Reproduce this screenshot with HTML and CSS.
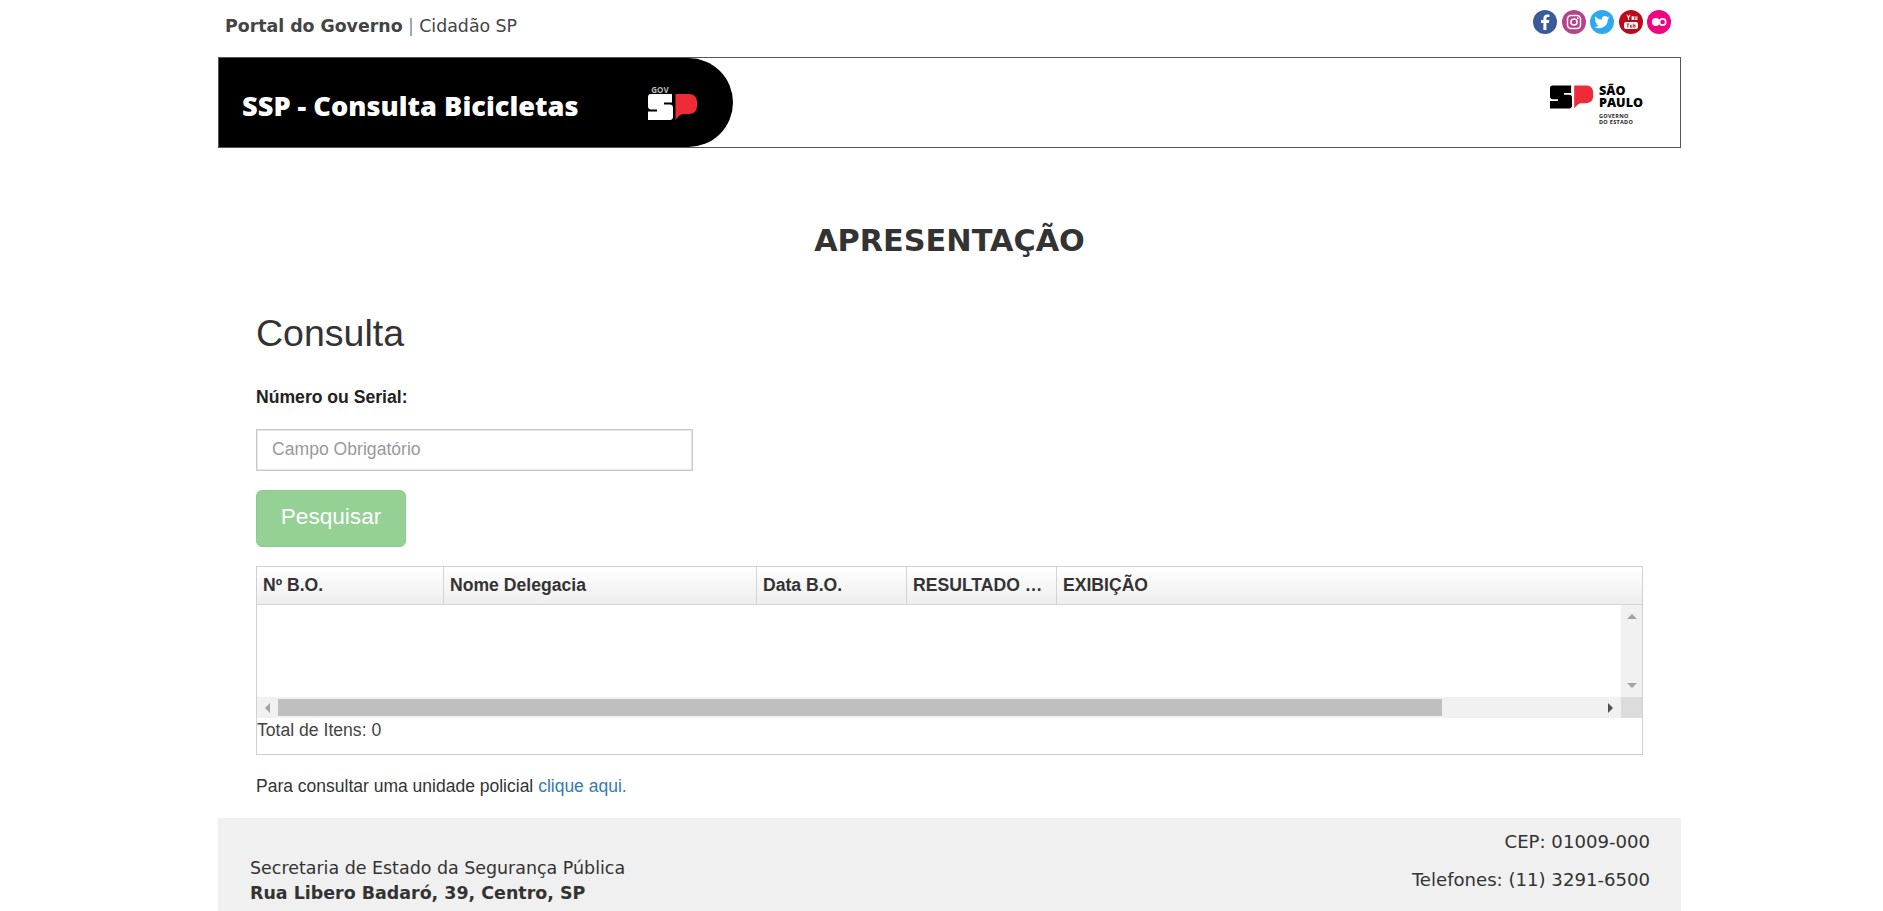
FILE: index.html
```html
<!DOCTYPE html>
<html lang="pt-BR">
<head>
<meta charset="utf-8">
<title>SSP - Consulta Bicicletas</title>
<link rel="stylesheet" href="styles.css">
</head>
<body>
<div class="page">
  <header class="topbar">
    <p class="portal"><strong>Portal do Governo</strong> <span class="sep">|</span> Cidadão SP</p>
    <ul class="social">
      <li class="soc soc-fb"><svg viewBox="0 0 24 24"><path fill="#fff" d="M13.4 20v-7.1h2.5l.4-2.8h-2.9V8.4c0-.8.3-1.4 1.4-1.4h1.6V4.500c-.3 0-1.200-.1-2.300-.1-2.200 0-3.700 1.300-3.700 3.800v1.900H8v2.800h2.400V20z"/></svg></li>
      <li class="soc soc-ig"><svg viewBox="0 0 24 24"><rect x="5.500" y="5.500" width="13" height="13" rx="3.500" fill="none" stroke="#fff" stroke-width="1.500"/><circle cx="12" cy="12" r="3.100" fill="none" stroke="#fff" stroke-width="1.500"/><circle cx="15.800" cy="8.200" r=".9" fill="#fff"/></svg></li>
      <li class="soc soc-tw"><svg viewBox="0 0 24 24"><path fill="#fff" d="M19.500 7.400c-.6.3-1.200.4-1.800.5.600-.4 1.100-1 1.400-1.700-.6.400-1.300.6-2 .8a3.100 3.100 0 0 0-5.300 2.800 8.800 8.800 0 0 1-6.400-3.200 3.100 3.100 0 0 0 1 4.100c-.5 0-1-.2-1.400-.4 0 1.500 1.100 2.800 2.500 3.100-.5.100-.9.100-1.400.1.400 1.200 1.500 2.100 2.900 2.100a6.200 6.200 0 0 1-4.600 1.300 8.800 8.800 0 0 0 13.500-7.800c.6-.5 1.200-1.100 1.600-1.700z"/></svg></li>
      <li class="soc soc-yt"><svg viewBox="0 0 24 24"><path fill="#fff" d="M7.500 4.800h1.200l.8 1.900.8-1.900h1.200l-1.500 3.200v2H9V8zM12.600 6.200h2.200v3.800h-2.200zM15.600 6.200h1v3h.8v-3h1v3.800h-2.800zM7 12h10a2 2 0 0 1 2 2v3a2 2 0 0 1-2 2H7a2 2 0 0 1-2-2v-3a2 2 0 0 1 2-2z"/><path fill="#bb0a1a" d="M7.500 13.400h2.800v.9h-.9v3.300h-1v-3.300h-.9zM11 14.800h.8v2h.7v-2h.8v2.800H11zM14.300 13.400h.8v1.400h1.400v2.800h-2.200zM15.100 15.600v1.200h.6v-1.200z"/></svg></li>
      <li class="soc soc-fl"><svg viewBox="0 0 24 24"><circle cx="8.800" cy="12" r="3.900" fill="#fff"/><circle cx="15.600" cy="12" r="3.100" fill="#f0047f" stroke="#fff" stroke-width="1.600"/></svg></li>
    </ul>
  </header>

  <div class="banner">
    <div class="banner-title">
      <span class="banner-text">SSP - Consulta Bicicletas</span>
      <div class="gov-mark">
        <span class="gov-label">GOV</span>
        <svg class="sp-mark" viewBox="0 0 50 26">
          <path fill="#fff" d="M3 0H24V8.500H16V10.500H22C24 10.500 25 12 25 13.500V23C25 24.500 24 26 22 26H0V17.500H9V15.500H3C1 15.500 0 14 0 12.500V3C0 1 1 0 3 0Z"/>
          <path fill="#ee2b36" d="M27.500 0H41c5 0 8 3 8 8v4c0 5-3 8-8 8h-5c-4 0-6 3-8.500 6z"/>
        </svg>
      </div>
    </div>
    <div class="state-logo">
      <svg class="sp-mark-large" viewBox="0 0 50 26">
        <path fill="#000" d="M3 0H24V8.500H16V10.500H22C24 10.500 25 12 25 13.500V23C25 24.500 24 26 22 26H0V17.500H9V15.500H3C1 15.500 0 14 0 12.500V3C0 1 1 0 3 0Z"/>
        <path fill="#ee2b36" d="M27.500 0H41c5 0 8 3 8 8v4c0 5-3 8-8 8h-5c-4 0-6 3-8.500 6z"/>
      </svg>
      <div class="state-text">
        <span class="state-name">SÃO<br>PAULO</span>
        <span class="state-sub">GOVERNO<br>DO ESTADO</span>
      </div>
    </div>
  </div>

  <main class="content">
    <h1 class="page-title">APRESENTAÇÃO</h1>
    <h2 class="section-title">Consulta</h2>
    <label class="field-label" for="serial">Número ou Serial:</label>
    <input class="field-input" id="serial" type="text" placeholder="Campo Obrigatório">
    <button class="btn-search" type="button">Pesquisar</button>

    <section class="grid">
      <div class="grid-head">
        <div class="grid-col">Nº B.O.</div>
        <div class="grid-col">Nome Delegacia</div>
        <div class="grid-col">Data B.O.</div>
        <div class="grid-col">RESULTADO …</div>
        <div class="grid-col">EXIBIÇÃO</div>
      </div>
      <div class="grid-body">
        <div class="grid-rows"></div>
        <div class="vscroll">
          <span class="arrow arrow-up"></span>
          <span class="arrow arrow-down"></span>
        </div>
      </div>
      <div class="hscroll">
        <div class="hbutton"><span class="arrow arrow-left"></span></div>
        <div class="hthumb"></div>
        <div class="htrack"></div>
        <div class="hbutton"><span class="arrow arrow-right"></span></div>
        <div class="corner"></div>
      </div>
      <div class="grid-foot">Total de Itens: 0</div>
    </section>

    <p class="note">Para consultar uma unidade policial <a class="note-link" href="#">clique aqui.</a></p>
  </main>

  <footer class="footer">
    <div class="footer-left">
      <p class="footer-line">Secretaria de Estado da Segurança Pública</p>
      <p class="footer-line"><strong>Rua Libero Badaró, 39, Centro, SP</strong></p>
    </div>
    <div class="footer-right">
      <p class="footer-contact">CEP: 01009-000</p>
      <p class="footer-contact">Telefones: (11) 3291-6500</p>
    </div>
  </footer>
</div>
</body>
</html>
```

FILE: styles.css
```css
* { box-sizing: border-box; }
html, body { margin: 0; padding: 0; background: #fff; }
body { font-family: "Liberation Sans", Arial, sans-serif; font-size: 17.6px; color: #333; }
p, h1, h2, ul { margin: 0; padding: 0; }
.page { width: 1463px; margin-left: 218px; }

.topbar { height: 57px; display: flex; justify-content: space-between; align-items: flex-start; }
.portal { font-family: "DejaVu Sans", sans-serif; font-size: 17.400px; line-height: 20px; margin: 16px 0 0 7px; color: #444; word-spacing: -.2px; }
.portal strong { color: #444; }
.sep { color: #7a8bb0; }
.social { list-style: none; display: flex; gap: 4.500px; margin: 10px 10px 0 0; }
.soc { width: 24px; height: 24px; border-radius: 50%; display: block; }
.soc svg { display: block; width: 24px; height: 24px; }
.soc-fb { background: #3b5a98; }
.soc-ig { background: #b9408c; }
.soc-tw { background: #2da9f0; }
.soc-yt { background: #bb0a1a; }
.soc-fl { background: #f0047f; }

.banner { height: 91px; border: 1px solid #555; display: flex; justify-content: space-between; align-items: center; }
.banner-title { width: 514px; height: 89px; background: #000; border-radius: 0 45px 45px 0; display: flex; align-items: center; padding: 0 34px 0 23px; justify-content: space-between; }
.banner-text { font-family: "Open Sans", sans-serif; font-weight: 800; font-size: 27.200px; line-height: 32px; color: #fff; white-space: nowrap; margin-top: 6px; }
.gov-mark { display: flex; flex-direction: column; align-items: center; width: 52px; }
.gov-label { font-family: "Open Sans", sans-serif; font-weight: 700; font-size: 8px; line-height: 9px; color: #bbb; margin-left: -26px; }
.sp-mark { display: block; width: 52px; height: 26px; }
.state-logo { display: flex; align-items: flex-start; margin: 5px 37px 0 0; }
.sp-mark-large { display: block; width: 44px; height: 24px; margin-right: 5px; }
.state-text { display: flex; flex-direction: column; }
.state-name { font-family: "Open Sans", sans-serif; font-weight: 800; font-size: 12.600px; line-height: 12px; color: #000; }
.state-sub { font-family: "Open Sans", sans-serif; font-weight: 700; font-size: 5.500px; line-height: 6.500px; color: #222; margin-top: 4px; letter-spacing: .3px; }

.content { padding: 0 38px; }
.page-title { font-family: "DejaVu Sans", sans-serif; font-size: 30.300px; font-weight: 700; line-height: 34px; text-align: center; color: #333; margin-top: 76px; }
.section-title { font-weight: 400; font-size: 37.500px; line-height: 40px; color: #333; margin-top: 55px; }
.field-label { display: block; font-weight: 700; line-height: 24px; margin-top: 32px; color: #222; }
.field-input { display: block; width: 437px; height: 42px; border: 1px solid #c8c8c8; box-shadow: inset 0 0 0 1px #e6e6e6; border-radius: 0; padding: 0 15px 2px; font: inherit; margin-top: 20px; color: #333; background: #fff; outline: none; }
.field-input::placeholder { color: #999; opacity: 1; }
.btn-search { display: block; width: 150px; height: 57px; border: 1px solid #8ecb8e; border-radius: 6px; background: #95d095; color: #fff; font: inherit; font-size: 22.600px; margin-top: 19px; padding: 0 0 3px; }

.grid { border: 1px solid #d0d0d0; margin-top: 19px; height: 189px; width: 1387px; }
.grid-head { display: grid; grid-template-columns: 186px 313px 150px 150px 1fr; height: 38px; border-bottom: 1px solid #d4d4d4; background: linear-gradient(#fff, #eee); }
.grid-col { font-weight: 700; line-height: 37px; padding-left: 6px; border-left: 1px solid #d4d4d4; color: #333; white-space: nowrap; }
.grid-col:first-child { border-left: 0; }
.grid-body { display: flex; height: 92px; }
.grid-rows { flex: 1; }
.vscroll { width: 21px; background: #f1f1f1; display: flex; flex-direction: column; justify-content: space-between; align-items: center; padding: 9px 0; }
.arrow { display: block; width: 0; height: 0; border-style: solid; border-color: transparent; }
.arrow-up { border-width: 0 5px 5px; border-bottom-color: #a3a3a3; }
.arrow-down { border-width: 5px 5px 0; border-top-color: #a3a3a3; }
.arrow-left { border-width: 5px 5px 5px 0; border-right-color: #a3a3a3; }
.arrow-right { border-width: 5px 0 5px 5px; border-left-color: #505050; }
.hscroll { display: flex; height: 21px; background: #f1f1f1; align-items: center; }
.hbutton { width: 21px; height: 21px; display: flex; align-items: center; justify-content: center; }
.hthumb { width: 1164px; height: 17px; background: #bfbfbf; }
.htrack { flex: 1; }
.corner { width: 21px; height: 21px; background: #dcdcdc; }
.grid-foot { color: #444; line-height: 24px; }

.note { margin-top: 19px; line-height: 24px; color: #333; font-size: 17.500px; }
.note-link { color: #337ab7; text-decoration: none; }

.footer { margin-top: 20px; background: #f0f0f0; display: flex; justify-content: space-between; padding: 0 31px 0 32px; height: 200px; font-family: "DejaVu Sans", sans-serif; font-size: 17.450px; color: #333; }
.footer-left { padding-top: 38px; }
.footer-line { line-height: 25px; }
.footer-right { padding-top: 5px; text-align: right; font-size: 18.100px; }
.footer-contact { line-height: 38px; }
```
